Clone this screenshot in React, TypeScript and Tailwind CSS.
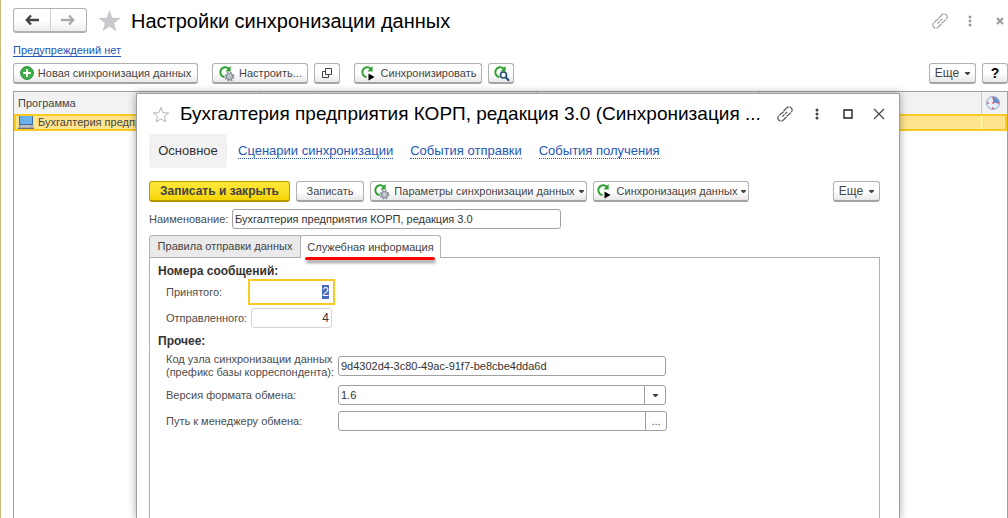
import { useEffect, useRef } from "react";
import type { ReactNode } from "react";
import clsx from "clsx";

type ButtonProps = {
    children: ReactNode;
    className?: string;
    label?: string;
    primary?: boolean;
};

const navLinks = ["Сценарии синхронизации", "События отправки", "События получения"];

const inputClass =
    "h-5 min-w-0 rounded-[3px] border border-[#a0a0a0] bg-white px-0.5 text-[11px] text-[#333] outline-none";

function Button({ children, className, label, primary }: ButtonProps) {
    return (
        <button
            type="button"
            aria-label={label}
            className={clsx(
                "flex h-[21px] shrink-0 items-center justify-center whitespace-nowrap rounded-[3px] border border-b-2",
                primary
                    ? "border-[#b59b00] bg-linear-to-b from-[#ffe838] to-[#f5d500] text-xs font-bold text-[#444]"
                    : "border-[#b0b0b0] border-b-[#a4a4a4] bg-linear-to-b from-white from-50% to-[#e8e8e8] text-[#444]",
                className,
            )}
        >
            {children}
        </button>
    );
}

function Caret() {
    return (
        <svg width="5" height="3" viewBox="0 0 5 3" className="shrink-0">
            <path d="M0 0h5v1L3 3H2L0 1z" fill="#444" />
        </svg>
    );
}

type SyncKind = "settings" | "run" | "search";

function SyncIcon({ kind }: { kind: SyncKind }) {
    return (
        <svg width="17" height="17" viewBox="0 0 17 17" fill="none" className="shrink-0">
            <path d="M6.5 12.2A5 5 0 1 1 10.8 3.7" stroke="#30a030" strokeWidth="2" />
            <path d="M12.6 1v5.6H7.4z" fill="#30a030" />
            {kind === "settings" && (
                <g>
                    <circle cx="11.5" cy="11.6" r="4.2" stroke="#87909a" strokeWidth="1.4" strokeDasharray="1.8 1.5" />
                    <circle cx="11.5" cy="11.6" r="3" fill="#dfe3e7" stroke="#87909a" strokeWidth="1.4" />
                    <circle cx="11.5" cy="11.6" r="1.1" fill="#fff" stroke="#87909a" strokeWidth="0.8" />
                </g>
            )}
            {kind === "run" && <path d="M8.5 8.5v7l6-3.5z" fill="#000" />}
            {kind === "search" && (
                <g stroke="#1f4e79">
                    <circle cx="10.5" cy="10" r="3" fill="#fff" strokeWidth="1.6" />
                    <path d="m12.8 12.3 3.2 3.4" strokeWidth="2" />
                </g>
            )}
        </svg>
    );
}

function LinkIcon() {
    return (
        <svg width="16" height="16" viewBox="0 0 16 16" fill="none" stroke="currentColor" strokeWidth="1.1">
            <path d="M6.6 5 9.8 1.8a3 3 0 0 1 4.4 0 3 3 0 0 1 0 4.400L11.200 9.200a3 3 0 0 1-2 .8" strokeDasharray="6.500 .9" />
            <path d="M9.400 11 6.200 14.200a3 3 0 0 1-4.400 0 3 3 0 0 1 0-4.400L4.800 6.800a3 3 0 0 1 2-.8" strokeDasharray="6.500 .9" />
            <path d="m5.400 10.600 5.200-5.200" strokeDasharray="3 .8" />
        </svg>
    );
}

function DotsIcon() {
    return (
        <svg width="4" height="12" viewBox="0 0 4 12" fill="currentColor">
            <circle cx="2" cy="2" r="1.500" />
            <circle cx="2" cy="6" r="1.500" />
            <circle cx="2" cy="10" r="1.500" />
        </svg>
    );
}

function ArrowIcon() {
    return (
        <svg width="14" height="12" viewBox="0 0 14 12" fill="none" stroke="currentColor" strokeWidth="2.400">
            <path d="M14 6H2M6 1.500 1.800 6 6 10.500" />
        </svg>
    );
}

function ClockIcon() {
    return (
        <svg width="14" height="14" viewBox="0 0 14 14">
            <circle cx="7" cy="7" r="6.400" fill="#e6effa" stroke="#7f9fd0" />
            <path d="M7 7V.8A6.200 6.200 0 0 1 13.200 7z" fill="#6e90c8" />
            <path
                d="M6.300 1.300h1.500v1.500H6.300zM6.300 11.200h1.500v1.500H6.300zM1.300 6.300h1.500v1.500H1.300zM11.200 6.300h1.500v1.500h-1.500zM6.300 6.300h1.500v1.500H6.300z"
                fill="#ff3b3b"
            />
        </svg>
    );
}

function ComputerIcon() {
    return (
        <svg width="16" height="13" viewBox="0 0 16 13" className="shrink-0">
            <path d="M1 0h14v9H1z" fill="#3f6e9e" />
            <path d="M2 0h12v8H2z" fill="#6ab2ec" />
            <path d="M1 9h14l1 3H0z" fill="#a8a8a8" />
            <path d="M0 12h16v1H0z" fill="#707070" />
            <path d="M3 10h10" stroke="#d8d8d8" />
        </svg>
    );
}

function Dialog() {
    const received = useRef<HTMLInputElement>(null);

    // the first editable number is focused with its value selected
    useEffect(() => {
        received.current?.focus();
        received.current?.select();
    }, []);

    return (
        <section
            role="dialog"
            aria-labelledby="dialog-title"
            className="absolute top-[93px] right-[108px] bottom-0 left-[135px] flex flex-col overflow-hidden border border-b-0 border-[#a0a0a0] bg-white pr-[19px] pl-3 shadow-[0_0_8px_rgba(0,0,0,0.35)]"
        >
            <header className="flex h-10 shrink-0 items-center">
                <button type="button" aria-label="В избранное" className="mr-2.5 ml-[3px] text-[#b0b4ba]">
                    <svg width="18" height="17" viewBox="0 0 18 17" fill="none" stroke="currentColor">
                        <path d="m9 1.500 2.100 5.200 5.600.3-4.300 3.500 1.400 5.400L9 12.900l-4.800 3 1.400-5.400L1.300 7l5.600-.3z" />
                    </svg>
                </button>
                <h2 id="dialog-title" className="min-w-0 flex-1 truncate text-[19px] text-black">
                    Бухгалтерия предприятия КОРП, редакция 3.0 (Синхронизация ...
                </h2>
                <div className="flex items-center text-[#444]">
                    <button type="button" aria-label="Получить ссылку" className="mr-[22px]">
                        <LinkIcon />
                    </button>
                    <button type="button" aria-label="Действия" className="mr-6">
                        <DotsIcon />
                    </button>
                    <button type="button" aria-label="Развернуть" className="mr-5">
                        <svg width="10" height="10" viewBox="0 0 10 10" fill="none" stroke="#222" strokeWidth="1.400">
                            <path d="M1 1h8v8H1z" />
                        </svg>
                    </button>
                    <button type="button" aria-label="Закрыть" className="-mr-[5px]">
                        <svg width="12" height="12" viewBox="0 0 12 12" fill="none" stroke="currentColor" strokeWidth="1.200">
                            <path d="m1 1 10 10M11 1 1 11" />
                        </svg>
                    </button>
                </div>
            </header>

            <nav className="flex h-[34px] shrink-0 items-center gap-[11px] text-[13px]">
                <span className="flex h-full w-[78px] items-center justify-center rounded bg-[#f2f2f2] text-[#333]">
                    Основное
                </span>
                <div className="flex gap-[17px]">
                    {navLinks.map((text) => (
                        <a
                            key={text}
                            href="#"
                            className="border-b border-dotted border-[#2457b8] leading-[14px] whitespace-nowrap text-[#2457b8]"
                        >
                            {text}
                        </a>
                    ))}
                </div>
            </nav>

            <div className="mt-[13px] flex shrink-0 gap-1.5">
                <Button primary className="w-[141px]">
                    Записать и закрыть
                </Button>
                <Button className="w-[68px]">Записать</Button>
                <Button className="w-[217px] gap-1">
                    <SyncIcon kind="settings" />
                    Параметры синхронизации данных
                    <Caret />
                </Button>
                <Button className="w-[156px] gap-1">
                    <SyncIcon kind="run" />
                    Синхронизация данных
                    <Caret />
                </Button>
                <Button className="ml-auto w-[47px] gap-1.5 text-xs">
                    Еще
                    <Caret />
                </Button>
            </div>

            <div className="mt-[7px] flex shrink-0 items-center">
                <label htmlFor="name" className="w-[83px] text-[#4d4d4d]">
                    Наименование:
                </label>
                <input
                    id="name"
                    className={clsx(inputClass, "w-[329px]")}
                    defaultValue="Бухгалтерия предприятия КОРП, редакция 3.0"
                />
            </div>

            <div role="tablist" className="relative z-10 mt-1.5 -mb-px flex h-[23px] shrink-0 text-[#444]">
                <button
                    type="button"
                    role="tab"
                    aria-selected={false}
                    className="w-[152px] rounded-tl-[3px] border border-[#b0b0b0] bg-[#eaeaea]"
                >
                    Правила отправки данных
                </button>
                <button
                    type="button"
                    role="tab"
                    aria-selected={true}
                    className="relative -ml-px w-[141px] rounded-t-[3px] border border-b-0 border-[#b0b0b0] bg-white"
                >
                    Служебная информация
                    <span className="absolute top-[21px] left-1 h-[3px] w-[130px] rounded-full bg-[#f80000] shadow-[1px_3px_3px_rgba(0,0,0,0.4)]" />
                </button>
            </div>

            <div role="tabpanel" className="flex-1 border border-b-0 border-[#b0b0b0] pt-[5px] pl-2 text-[#4d4d4d]">
                <h3 className="h-4 text-xs leading-4 font-bold text-[#333]">Номера сообщений:</h3>
                <div className="flex h-[26px] items-center pl-2">
                    <label htmlFor="received" className="w-[82px]">
                        Принятого:
                    </label>
                    <input
                        id="received"
                        ref={received}
                        defaultValue="2"
                        className="h-[26px] w-[87px] border-2 border-[#f9ca24] bg-white pr-1 text-right text-xs text-[#333] outline-none selection:bg-[#4a69bd] selection:text-white"
                    />
                </div>
                <div className="mt-[3px] flex items-center pl-2">
                    <label htmlFor="sent" className="w-[85px]">
                        Отправленного:
                    </label>
                    <input
                        id="sent"
                        readOnly
                        defaultValue="4"
                        className="h-5 w-[81px] rounded-[3px] border border-[#d4d4d4] bg-white pr-0.5 text-right text-xs text-[#333] outline-none"
                    />
                </div>

                <h3 className="mt-[5px] h-4 text-xs leading-4 font-bold text-[#333]">Прочее:</h3>
                <div className="mt-1 flex h-[26px] items-center pl-2">
                    <label htmlFor="node" className="w-[172px] leading-[13px] whitespace-nowrap">
                        Код узла синхронизации данных
                        <br />
                        (префикс базы корреспондента):
                    </label>
                    <input
                        id="node"
                        className={clsx(inputClass, "w-[328px]")}
                        defaultValue="9d4302d4-3c80-49ac-91f7-be8cbe4dda6d"
                    />
                </div>
                <div className="mt-1.5 flex items-center pl-2">
                    <label htmlFor="version" className="w-[172px]">
                        Версия формата обмена:
                    </label>
                    <div className="relative w-[328px]">
                        <select id="version" className={clsx(inputClass, "block w-full appearance-none")}>
                            <option>1.6</option>
                        </select>
                        <span className="pointer-events-none absolute inset-y-0 right-0 flex w-[22px] items-center justify-center border-l border-[#a0a0a0]">
                            <Caret />
                        </span>
                    </div>
                </div>
                <div className="mt-1.5 flex items-center pl-2">
                    <label htmlFor="manager" className="w-[172px]">
                        Путь к менеджеру обмена:
                    </label>
                    <input id="manager" className={clsx(inputClass, "w-[308px] rounded-r-none")} />
                    <button
                        type="button"
                        aria-label="Выбрать"
                        className="-ml-px h-5 w-[22px] rounded-r-[3px] border border-[#a0a0a0] bg-white leading-4"
                    >
                        ...
                    </button>
                </div>
            </div>
        </section>
    );
}

export default function App() {
    return (
        <main className="relative flex min-h-screen flex-col overflow-hidden border-l border-[#cdbb7c] bg-white pl-3 font-['Liberation_Sans',Arial,sans-serif] text-[11px] text-[#444]">
            <header className="mt-2 flex h-[25px] items-center">
                <div className="flex h-[25px] w-[74px] rounded-[3px] border border-b-2 border-[#b0b0b0] bg-linear-to-b from-white from-50% to-[#ececec]">
                    <button type="button" aria-label="Назад" className="flex flex-1 items-center justify-center text-[#444]">
                        <ArrowIcon />
                    </button>
                    <button
                        type="button"
                        aria-label="Вперед"
                        className="flex flex-1 items-center justify-center border-l border-[#d0d0d0] text-[#aaa]"
                    >
                        <span className="rotate-180">
                            <ArrowIcon />
                        </span>
                    </button>
                </div>
                <button type="button" aria-label="Избранное" className="mr-2.5 ml-[11px]">
                    <svg width="23" height="22" viewBox="0 0 23 22" fill="#c8cacd">
                        <path d="m11.500 0 2.900 7.800 8.300.3-6.500 5.200 2.200 8-6.900-4.600-6.900 4.600 2.200-8L.3 8.100l8.300-.3z" />
                    </svg>
                </button>
                <h1 className="flex-1 text-xl text-black">Настройки синхронизации данных</h1>
                <div className="mr-1 flex items-center text-[#999]">
                    <button type="button" aria-label="Получить ссылку" className="mr-5">
                        <LinkIcon />
                    </button>
                    <button type="button" aria-label="Действия" className="mr-6">
                        <DotsIcon />
                    </button>
                    <button type="button" aria-label="Закрыть">
                        <svg width="8" height="8" viewBox="0 0 8 8" fill="none" stroke="currentColor" strokeWidth="2">
                            <path d="m1 1 6 6M7 1 1 7" />
                        </svg>
                    </button>
                </div>
            </header>

            <div className="mt-2.5 flex h-[15px] items-center">
                <a href="#" className="text-[#2457b8] underline underline-offset-2">
                    Предупреждений нет
                </a>
            </div>

            <div className="mt-[5px] flex">
                <Button className="w-[185px] gap-1">
                    <svg width="14" height="14" viewBox="0 0 14 14" className="shrink-0">
                        <circle cx="7" cy="7" r="6.400" fill="#3fae49" stroke="#2a8a38" />
                        <path d="M7 3.200v7.600M3.200 7h7.600" stroke="#fff" strokeWidth="2" />
                    </svg>
                    Новая синхронизация данных
                </Button>
                <Button className="ml-3.5 w-24 gap-1">
                    <SyncIcon kind="settings" />
                    Настроить...
                </Button>
                <Button label="Открыть в окне" className="ml-1.5 w-[26px]">
                    <svg width="10" height="10" viewBox="0 0 10 10" fill="none" stroke="#444">
                        <path d="M3.500.5h6v6h-6zM3.500 3.500h-3v6h6v-3" />
                    </svg>
                </Button>
                <Button className="ml-3.5 w-32 gap-1">
                    <SyncIcon kind="run" />
                    Синхронизировать
                </Button>
                <Button label="Найти" className="ml-1.5 w-[26px]">
                    <SyncIcon kind="search" />
                </Button>
                <Button className="ml-auto w-[47px] gap-1.5 text-xs">
                    Еще
                    <Caret />
                </Button>
                <Button label="Справка" className="ml-1.5 w-[26px] text-sm font-bold text-black">
                    ?
                </Button>
            </div>

            <div className="mt-[7px] flex-1 border border-b-0 border-[#a0a0a0]">
                <table className="w-full table-fixed border-collapse">
                    <thead>
                        <tr className="h-[22px] border-b border-[#d8d8d8] bg-[#f2f2f2] text-left">
                            <th className="w-[245px] px-1 font-normal">Программа</th>
                            <th className="w-[55px] border-l border-[#c8c8c8]" />
                            <th className="w-[222px] border-l border-[#c8c8c8]" />
                            <th className="border-l border-[#c8c8c8]" />
                            <th className="w-[222px] border-l border-[#c8c8c8]" />
                            <th className="w-[26px] border-l border-[#c8c8c8] p-0 pl-1">
                                <ClockIcon />
                            </th>
                        </tr>
                    </thead>
                    <tbody>
                        <tr className="h-4 bg-[#ffe48f] outline-2 -outline-offset-2 outline-[#f9ca24]">
                            <td className="p-0 pl-1">
                                <div className="flex h-4 items-center gap-1 overflow-hidden whitespace-nowrap">
                                    <ComputerIcon />
                                    Бухгалтерия предприятия
                                </div>
                            </td>
                            <td />
                            <td />
                            <td />
                            <td />
                            <td className="border-l border-white" />
                        </tr>
                    </tbody>
                </table>
            </div>

            <Dialog />
        </main>
    );
}
